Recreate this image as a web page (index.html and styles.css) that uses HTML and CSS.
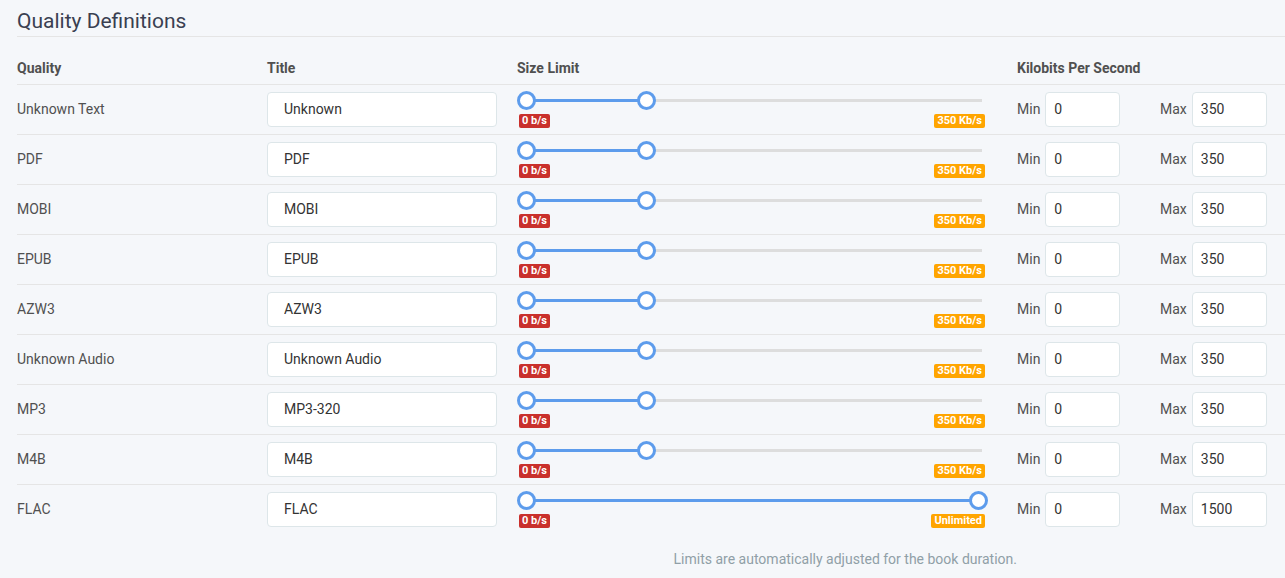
FILE: index.html
```html
<!DOCTYPE html>
<html lang="en">
<head>
<meta charset="utf-8">
<title>Quality Definitions</title>
<link rel="stylesheet" href="styles.css">
</head>
<body>
<div class="page">
  <h2 class="title">Quality Definitions</h2>
  <div class="table">
    <div class="row head">
      <div class="cell">Quality</div>
      <div class="cell">Title</div>
      <div class="cell">Size Limit</div>
      <div class="cell">Kilobits Per Second</div>
    </div>

    <div class="row">
      <div class="cell name">Unknown Text</div>
      <div class="cell"><input class="title-input" value="Unknown"></div>
      <div class="cell">
        <div class="slider">
          <div class="track"><div class="fill" style="width:120px"></div><span class="handle" style="left:0"></span><span class="handle" style="left:120px"></span></div>
          <div class="badges"><span class="badge min">0 b/s</span><span class="badge max">350 Kb/s</span></div>
        </div>
      </div>
      <div class="cell kbps">
        <label class="group"><span class="lbl">Min</span><input class="num" value="0"></label>
        <label class="group"><span class="lbl">Max</span><input class="num" value="350"></label>
      </div>
    </div>

    <div class="row">
      <div class="cell name">PDF</div>
      <div class="cell"><input class="title-input" value="PDF"></div>
      <div class="cell">
        <div class="slider">
          <div class="track"><div class="fill" style="width:120px"></div><span class="handle" style="left:0"></span><span class="handle" style="left:120px"></span></div>
          <div class="badges"><span class="badge min">0 b/s</span><span class="badge max">350 Kb/s</span></div>
        </div>
      </div>
      <div class="cell kbps">
        <label class="group"><span class="lbl">Min</span><input class="num" value="0"></label>
        <label class="group"><span class="lbl">Max</span><input class="num" value="350"></label>
      </div>
    </div>

    <div class="row">
      <div class="cell name">MOBI</div>
      <div class="cell"><input class="title-input" value="MOBI"></div>
      <div class="cell">
        <div class="slider">
          <div class="track"><div class="fill" style="width:120px"></div><span class="handle" style="left:0"></span><span class="handle" style="left:120px"></span></div>
          <div class="badges"><span class="badge min">0 b/s</span><span class="badge max">350 Kb/s</span></div>
        </div>
      </div>
      <div class="cell kbps">
        <label class="group"><span class="lbl">Min</span><input class="num" value="0"></label>
        <label class="group"><span class="lbl">Max</span><input class="num" value="350"></label>
      </div>
    </div>

    <div class="row">
      <div class="cell name">EPUB</div>
      <div class="cell"><input class="title-input" value="EPUB"></div>
      <div class="cell">
        <div class="slider">
          <div class="track"><div class="fill" style="width:120px"></div><span class="handle" style="left:0"></span><span class="handle" style="left:120px"></span></div>
          <div class="badges"><span class="badge min">0 b/s</span><span class="badge max">350 Kb/s</span></div>
        </div>
      </div>
      <div class="cell kbps">
        <label class="group"><span class="lbl">Min</span><input class="num" value="0"></label>
        <label class="group"><span class="lbl">Max</span><input class="num" value="350"></label>
      </div>
    </div>

    <div class="row">
      <div class="cell name">AZW3</div>
      <div class="cell"><input class="title-input" value="AZW3"></div>
      <div class="cell">
        <div class="slider">
          <div class="track"><div class="fill" style="width:120px"></div><span class="handle" style="left:0"></span><span class="handle" style="left:120px"></span></div>
          <div class="badges"><span class="badge min">0 b/s</span><span class="badge max">350 Kb/s</span></div>
        </div>
      </div>
      <div class="cell kbps">
        <label class="group"><span class="lbl">Min</span><input class="num" value="0"></label>
        <label class="group"><span class="lbl">Max</span><input class="num" value="350"></label>
      </div>
    </div>

    <div class="row">
      <div class="cell name">Unknown Audio</div>
      <div class="cell"><input class="title-input" value="Unknown Audio"></div>
      <div class="cell">
        <div class="slider">
          <div class="track"><div class="fill" style="width:120px"></div><span class="handle" style="left:0"></span><span class="handle" style="left:120px"></span></div>
          <div class="badges"><span class="badge min">0 b/s</span><span class="badge max">350 Kb/s</span></div>
        </div>
      </div>
      <div class="cell kbps">
        <label class="group"><span class="lbl">Min</span><input class="num" value="0"></label>
        <label class="group"><span class="lbl">Max</span><input class="num" value="350"></label>
      </div>
    </div>

    <div class="row">
      <div class="cell name">MP3</div>
      <div class="cell"><input class="title-input" value="MP3-320"></div>
      <div class="cell">
        <div class="slider">
          <div class="track"><div class="fill" style="width:120px"></div><span class="handle" style="left:0"></span><span class="handle" style="left:120px"></span></div>
          <div class="badges"><span class="badge min">0 b/s</span><span class="badge max">350 Kb/s</span></div>
        </div>
      </div>
      <div class="cell kbps">
        <label class="group"><span class="lbl">Min</span><input class="num" value="0"></label>
        <label class="group"><span class="lbl">Max</span><input class="num" value="350"></label>
      </div>
    </div>

    <div class="row">
      <div class="cell name">M4B</div>
      <div class="cell"><input class="title-input" value="M4B"></div>
      <div class="cell">
        <div class="slider">
          <div class="track"><div class="fill" style="width:120px"></div><span class="handle" style="left:0"></span><span class="handle" style="left:120px"></span></div>
          <div class="badges"><span class="badge min">0 b/s</span><span class="badge max">350 Kb/s</span></div>
        </div>
      </div>
      <div class="cell kbps">
        <label class="group"><span class="lbl">Min</span><input class="num" value="0"></label>
        <label class="group"><span class="lbl">Max</span><input class="num" value="350"></label>
      </div>
    </div>

    <div class="row">
      <div class="cell name">FLAC</div>
      <div class="cell"><input class="title-input" value="FLAC"></div>
      <div class="cell">
        <div class="slider">
          <div class="track"><div class="fill" style="width:452px"></div><span class="handle" style="left:0"></span><span class="handle" style="left:452px"></span></div>
          <div class="badges"><span class="badge min">0 b/s</span><span class="badge max">Unlimited</span></div>
        </div>
      </div>
      <div class="cell kbps">
        <label class="group"><span class="lbl">Min</span><input class="num" value="0"></label>
        <label class="group"><span class="lbl">Max</span><input class="num" value="1500"></label>
      </div>
    </div>
  </div>
  <div class="note">Limits are automatically adjusted for the book duration.</div>
</div>
</body>
</html>
```

FILE: styles.css
```css
* { box-sizing: border-box; }

html, body {
  margin: 0;
  background: #f5f7fa;
}

body {
  font-family: Roboto, "Open Sans", "Liberation Sans", sans-serif;
  font-size: 14px;
  color: #505050;
}

.page {
  padding-left: 17px;
  overflow: hidden;
}

.title {
  margin: 0;
  padding: 9px 0 3px;
  font-size: 21px;
  line-height: 24px;
  font-weight: 400;
  color: #3a3f51;
  border-bottom: 1px solid #e5e5e5;
}

.table {
  display: flex;
  flex-direction: column;
}

.row {
  display: grid;
  grid-template-columns: 250px 250px 500px 1fr;
  align-items: center;
  height: 50px;
  padding-bottom: 1px;
  border-top: 1px solid #e5e5e5;
}

.row.head {
  height: 47px;
  border-top: 0;
  align-items: end;
  padding-bottom: 6px;
  font-weight: 700;
  line-height: 20px;
}

.cell {
  min-width: 0;
  line-height: 20px;
}

.title-input,
.num {
  display: block;
  height: 35px;
  border: 1px solid #dde6e9;
  border-radius: 4px;
  background: #fff;
  font-family: Roboto, "Open Sans", "Liberation Sans", sans-serif;
  font-size: 14px;
  color: #333;
  outline: none;
}

.title-input {
  width: 230px;
  padding: 0 16px;
}

.num {
  width: 75px;
  padding: 0 8px;
}

.slider {
  width: 470px;
  padding: 0 2px;
}

.track {
  position: relative;
  margin: 9px 0 0 7px;
  width: 456px;
  height: 3px;
  background: #dddddd;
}

.fill {
  position: absolute;
  left: 0;
  top: 0;
  height: 100%;
  background: #5d9cec;
}

.handle {
  position: absolute;
  top: 50%;
  width: 19px;
  height: 19px;
  margin: -9.5px 0 0 -9.5px;
  border: 3px solid #5d9cec;
  border-radius: 50%;
  background: #fff;
}

.badges {
  display: flex;
  justify-content: space-between;
  margin-top: 12px;
}

.badge {
  display: inline-block;
  height: 14px;
  padding: 0 3px;
  border-radius: 2px;
  color: #fff;
  font-size: 11px;
  font-weight: 700;
  line-height: 14px;
}

.badge.min { background: #c9302c; }
.badge.max { background: #ffa500; }

.kbps {
  display: flex;
  align-items: center;
}

.group {
  display: flex;
  align-items: center;
  flex: 0 0 143px;
  width: 143px;
}

.lbl {
  margin-right: 5px;
}

.note {
  width: 1000px;
  margin-top: 15px;
  text-align: right;
  color: #909fa7;
  line-height: 20px;
}
```
